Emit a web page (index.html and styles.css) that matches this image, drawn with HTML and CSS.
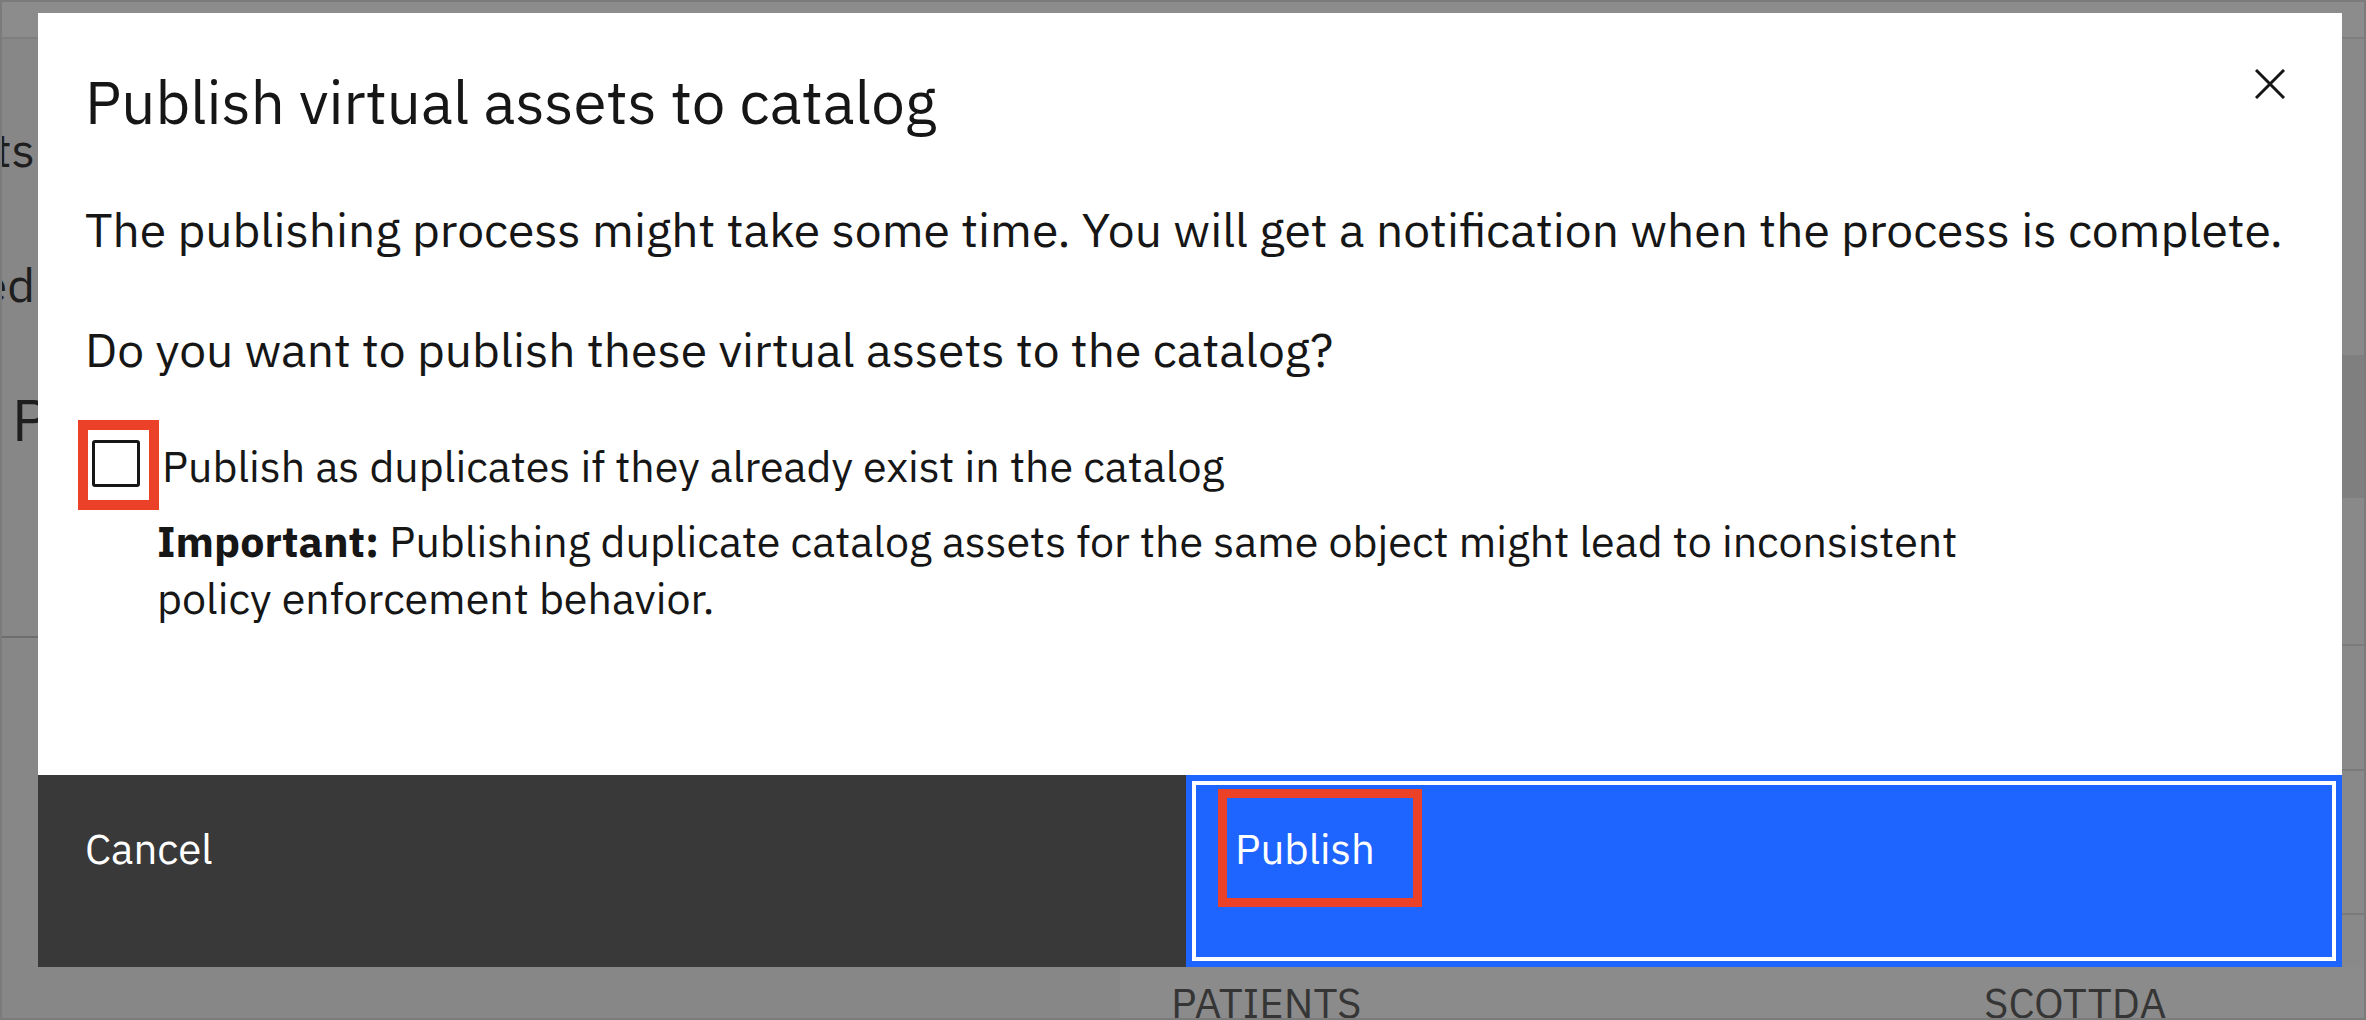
FILE: index.html
```html
<!DOCTYPE html>
<html lang="en">
<head>
<meta charset="utf-8">
<title>Publish virtual assets to catalog</title>
<link rel="stylesheet" href="styles.css">
</head>
<body>
<div class="screen">
  <div class="app">
    <div class="app-bar"></div>
    <div class="app-main">
      <aside class="side">
        <div class="side-item side-item--a"><span>Assets</span></div>
        <div class="side-item side-item--b"><span>Published</span></div>
        <div class="side-item side-item--c"><span>Preview</span></div>
        <div class="side-rule"></div>
      </aside>
      <section class="content"></section>
      <div class="scroll">
        <div class="scroll-thumb"></div>
        <div class="scroll-cell scroll-cell--a"></div>
        <div class="scroll-cell scroll-cell--b"></div>
        <div class="scroll-cell scroll-cell--c"></div>
      </div>
    </div>
    <div class="table-row">
      <div class="table-gap"></div>
      <div class="table-cells">
        <span class="cell cell--name">PATIENTS</span>
        <span class="cell cell--owner">SCOTTDA</span>
      </div>
    </div>
  </div>

  <div class="modal" role="dialog" aria-labelledby="modal-title">
    <header class="modal-header">
      <h2 class="modal-title" id="modal-title">Publish virtual assets to catalog</h2>
      <button class="modal-close" type="button" aria-label="Close">
        <svg viewBox="0 0 30 30" width="30" height="30" aria-hidden="true">
          <path d="M1 1 L29 29 M29 1 L1 29" stroke="#161616" stroke-width="3" fill="none"/>
        </svg>
      </button>
    </header>
    <div class="modal-body">
      <p class="modal-text modal-text--first">The publishing process might take some time. You will get a notification when the process is complete.</p>
      <p class="modal-text modal-text--second">Do you want to publish these virtual assets to the catalog?</p>
      <div class="check-row">
        <span class="check-box"><span class="annot annot--check"></span></span>
        <span class="check-label">Publish as duplicates if they already exist in the catalog</span>
      </div>
      <p class="helper"><strong>Important:</strong> Publishing duplicate catalog assets for the same object might lead to inconsistent policy enforcement behavior.</p>
    </div>
    <footer class="modal-footer">
      <button class="btn btn--secondary" type="button">Cancel</button>
      <button class="btn btn--primary" type="button">Publish<span class="annot annot--publish"></span></button>
    </footer>
  </div>
</div>
</body>
</html>
```

FILE: styles.css
```css
* {
  box-sizing: border-box;
  margin: 0;
  padding: 0;
}

html,
body {
  width: 2366px;
  height: 1020px;
  overflow: hidden;
}

body {
  font-family: "IBM Plex Sans", Roboto, "Liberation Sans", sans-serif;
  color: #161616;
  background: #8a8a8a;
}

.screen {
  position: relative;
  width: 2366px;
  height: 1020px;
  border: 2px solid #7b7b7b;
  background: #8a8a8a;
  overflow: hidden;
}

/* ---------- dimmed application behind the dialog ---------- */
.app {
  display: flex;
  flex-direction: column;
  height: 100%;
}

.app-bar {
  flex: none;
  height: 37px;
  background: #8c8c8c;
  border-bottom: 2px solid #7e7e7e;
}

.app-main {
  flex: none;
  height: 928px;
  display: flex;
}

.side {
  flex: none;
  width: 36px;
  display: flex;
  flex-direction: column;
  align-items: flex-end;
  overflow: hidden;
  background: #878787;
  color: #1e1e1e;
}

.side-item {
  white-space: nowrap;
  font-size: 48px;
  line-height: 56px;
  padding-right: 3px;
}

.side-item--a {
  margin-top: 82px;
}

.side-item--b {
  margin-top: 79px;
}

.side-item--c {
  align-self: flex-start;
  margin-top: 76px;
  margin-left: 10px;
  font-size: 58px;
  line-height: 64px;
}

.side-rule {
  align-self: stretch;
  height: 2px;
  margin-top: 184px;
  background: #6e6e6e;
}

.content {
  flex: 1;
}

.scroll {
  flex: none;
  width: 22px;
  display: flex;
  flex-direction: column;
  background: #898989;
}

.scroll-thumb {
  height: 143px;
  margin-top: 316px;
  background: #7f7f7f;
}

.scroll-cell {
  border-bottom: 2px solid #7b7b7b;
}

.scroll-cell--a {
  height: 148px;
}

.scroll-cell--b {
  height: 125px;
}

.scroll-cell--c {
  height: 144px;
}

.table-row {
  flex: 1;
  display: flex;
}

.table-gap {
  flex: none;
  width: 1118px;
  background: #878787;
}

.table-cells {
  flex: 1;
  display: flex;
  padding: 12px 0 0 51px;
  background: #8b8b8b;
  color: #353535;
  font-size: 42px;
  line-height: 48px;
}

.cell--name {
  width: 813px;
}

/* ---------- dialog ---------- */
.modal {
  position: absolute;
  left: 36px;
  top: 11px;
  width: 2304px;
  height: 954px;
  display: flex;
  flex-direction: column;
  background: #ffffff;
}

.modal-header {
  position: relative;
  padding: 49px 47px 0;
}

.modal-title {
  font-size: 60px;
  line-height: 80px;
  font-weight: 400;
}

.modal-close {
  position: absolute;
  top: 56px;
  right: 57px;
  width: 30px;
  height: 30px;
  display: flex;
  border: 0;
  background: transparent;
}

.modal-body {
  padding: 0 24px 0 47px;
}

.modal-text {
  font-size: 48px;
  line-height: 72px;
}

.modal-text--first {
  margin-top: 51px;
}

.modal-text--second {
  margin-top: 48px;
}

.check-row {
  display: flex;
  align-items: flex-start;
  margin-top: 53px;
}

.check-box {
  position: relative;
  flex: none;
  width: 48px;
  height: 47px;
  margin: 2px 0 0 7px;
  border: 3px solid #161616;
  border-radius: 3px;
}

.check-label {
  margin-left: 22px;
  font-size: 43px;
  line-height: 56px;
}

.helper {
  max-width: 1940px;
  margin-top: 19px;
  padding-left: 72px;
  font-size: 43px;
  line-height: 57px;
}

.helper strong {
  font-weight: 700;
}

.modal-footer {
  margin-top: auto;
  height: 192px;
  display: flex;
}

.btn {
  position: relative;
  flex: 1;
  display: flex;
  align-items: flex-start;
  height: 192px;
  border: 0;
  font-family: inherit;
  font-size: 42px;
  line-height: 56px;
  color: #ffffff;
  text-align: left;
}

.btn--secondary {
  padding: 46px 0 0 47px;
  background: #393939;
}

.btn--primary {
  padding: 40px 0 0 43px;
  background: #1e64ff;
  border: 6px solid #1e64ff;
  box-shadow: inset 0 0 0 4px #ffffff;
}

/* ---------- red annotation frames ---------- */
.annot {
  position: absolute;
  border-style: solid;
  border-color: #ea4128;
  pointer-events: none;
}

.annot--check {
  left: -17px;
  top: -23px;
  width: 81px;
  height: 90px;
  border-width: 10px;
}

.annot--publish {
  left: 26px;
  top: 8px;
  width: 204px;
  height: 118px;
  border-width: 9px;
}
```
